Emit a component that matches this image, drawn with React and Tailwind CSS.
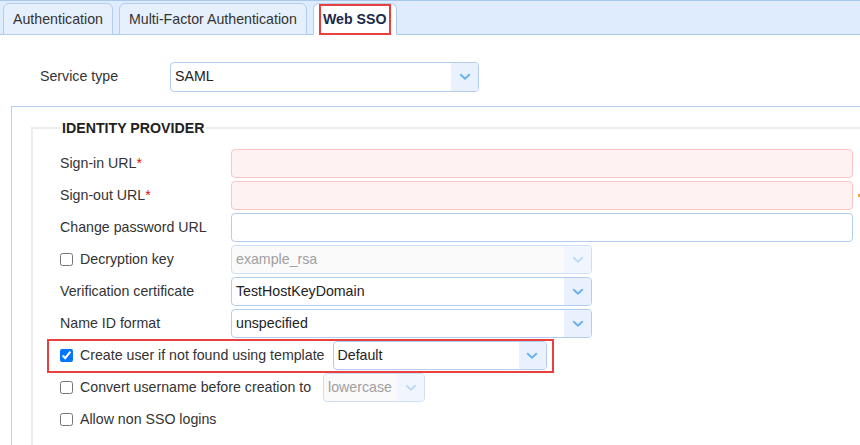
import React from "react";

const Chevron = ({ disabled }) => (
  <svg width="12" height="8" viewBox="0 0 12 8" fill="none">
    <polyline
      points="1.8,1.8 6,5.8 10.2,1.8"
      stroke={disabled ? "#bcdcf8" : "#6db3ef"}
      strokeWidth="2"
      strokeLinecap="round"
      strokeLinejoin="round"
    />
  </svg>
);

const Select = ({ value, className = "", disabled }) => (
  <div
    className={`flex h-[29px] shrink-0 overflow-hidden rounded-[4px] border ${
      disabled ? "border-[#cfe0f6] bg-[#fafafa]" : "border-[#b3cdef] bg-white"
    } ${className}`}
  >
    <div
      className={`flex flex-1 items-center pl-[4px] ${
        disabled ? "text-[#a0a0a0]" : "text-[#222]"
      }`}
    >
      {value}
    </div>
    <div
      className={`flex w-[27px] items-center justify-center ${
        disabled ? "bg-[#f1f6fe]" : "bg-[#e8f1fd]"
      }`}
    >
      <Chevron disabled={disabled} />
    </div>
  </div>
);

const Input = ({ error }) => (
  <div
    className={`h-[29px] flex-1 rounded-[4px] border ${
      error ? "border-[#ffc4c4] bg-[#fff2f2]" : "border-[#b3cdef] bg-white"
    }`}
  />
);

const Req = () => <span className="text-[#e01010]">*</span>;

const Label = ({ children }) => (
  <div className="flex h-[29px] w-[171px] shrink-0 items-center">{children}</div>
);

const Check = ({ checked }) => (
  <input
    type="checkbox"
    checked={!!checked}
    readOnly
    className="m-0 mr-[7px] h-[13px] w-[13px] accent-[#0075ff]"
  />
);

export default function App() {
  return (
    <div
      className="h-[445px] w-[860px] overflow-hidden bg-white text-[14.2px] text-[#333]"
      style={{ fontFamily: '"Liberation Sans", Arial, sans-serif' }}
    >
      {/* Tabs */}
      <div className="box-border flex h-[35px] items-end gap-[6px] border-y border-[#a9c8ef] bg-[#dfecfd] pl-[3px]">
        <div className="-mb-px flex h-[32px] items-center rounded-t-[6px] border border-[#b3cdef] bg-[#e6f0fd] px-[9px] pt-[2px] text-[#333]">
          Authentication
        </div>
        <div className="-mb-px flex h-[32px] items-center rounded-t-[6px] border border-[#b3cdef] bg-[#e6f0fd] px-[9px] pt-[2px] text-[#333]">
          Multi-Factor Authentication
        </div>
        <div className="-mb-px flex h-[32px] items-start rounded-t-[6px] border border-b-white border-[#b3cdef] bg-white px-[5px]">
          <div className="flex h-[31px] items-center border-2 border-[#e8403f] px-[2px] pt-[1px] font-bold text-[#1c2a4a]">
            Web SSO
          </div>
        </div>
      </div>

      {/* Service type */}
      <div className="mt-[27px] flex items-center pl-[40px]">
        <div className="w-[130px] shrink-0">Service type</div>
        <Select value="SAML" className="h-[30px] w-[309px]" />
      </div>

      {/* Outer panel */}
      <div className="ml-[11px] mt-[14px] border-l border-t border-[#b9d2f2] pb-[60px]">
        <fieldset className="m-0 ml-[19px] mt-[13px] border-0 border-l-2 border-t-2 border-[#ececec] pb-[40px] pl-[27px] pr-0 pt-[13px]">
          <legend className="ml-0 px-[2px] font-bold leading-[16px] text-[#222]">
            IDENTITY PROVIDER
          </legend>
          <div className="flex flex-col gap-[3px]">
            <div className="flex items-center">
              <Label>
                Sign-in URL
                <Req />
              </Label>
              <Input error />
              <div className="w-[7px]" />
            </div>
            <div className="flex items-center">
              <Label>
                Sign-out URL
                <Req />
              </Label>
              <Input error />
              <div className="flex w-[7px] justify-end">
                <span className="h-[3px] w-[2px] bg-[#efa83a]" />
              </div>
            </div>
            <div className="flex items-center">
              <Label>Change password URL</Label>
              <Input />
              <div className="w-[7px]" />
            </div>
            <div className="flex items-center">
              <Label>
                <Check />
                Decryption key
              </Label>
              <Select value="example_rsa" disabled className="w-[361px]" />
            </div>
            <div className="flex items-center">
              <Label>Verification certificate</Label>
              <Select value="TestHostKeyDomain" className="w-[361px]" />
            </div>
            <div className="flex items-center">
              <Label>Name ID format</Label>
              <Select value="unspecified" className="w-[361px]" />
            </div>
            <div className="relative flex items-center">
              <div className="pointer-events-none absolute -bottom-[3px] -top-[2px] left-[-13px] w-[507px] border-2 border-[#e8403f]" />
              <div className="flex h-[29px] items-center">
                <Check checked />
                Create user if not found using template
              </div>
              <Select value="Default" className="ml-[8px] w-[214px]" />
            </div>
            <div className="flex items-center">
              <div className="flex h-[29px] items-center">
                <Check />
                Convert username before creation to
              </div>
              <Select value="lowercase" disabled className="ml-[12px] w-[102px]" />
            </div>
            <div className="flex items-center">
              <div className="flex h-[29px] items-center">
                <Check />
                Allow non SSO logins
              </div>
            </div>
          </div>
        </fieldset>
      </div>
    </div>
  );
}
